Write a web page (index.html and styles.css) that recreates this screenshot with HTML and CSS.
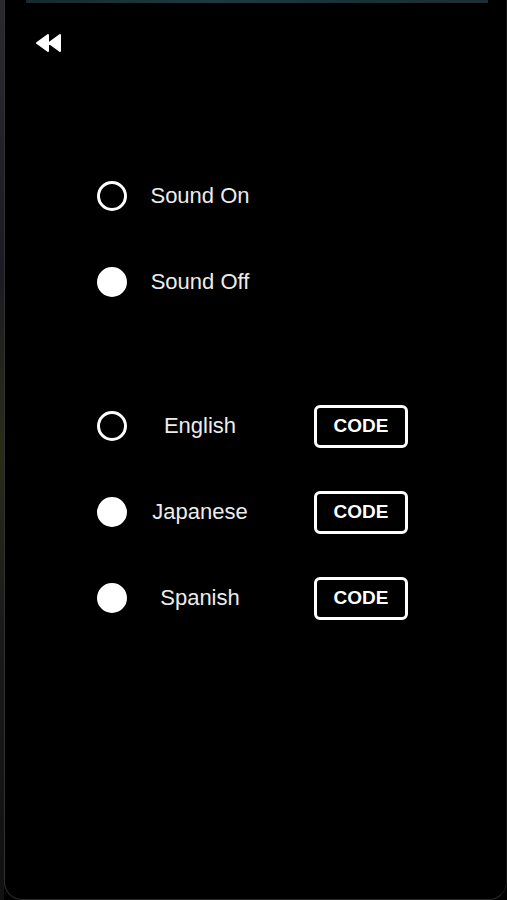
FILE: index.html
```html
<!DOCTYPE html>
<html lang="en">
<head>
<meta charset="utf-8">
<title>Settings</title>
<link rel="stylesheet" href="styles.css">
</head>
<body>
<div class="device">
  <div class="edge"></div>
  <div class="screen">
    <div class="topbar"></div>
    <header class="header">
      <button class="back" aria-label="Back">
        <svg width="27" height="20" viewBox="0 0 27 20">
          <path d="M2 10 L13 2 L13 18 Z M14 10 L25 2 L25 18 Z" fill="#fff" stroke="#fff" stroke-width="2" stroke-linejoin="round"/>
        </svg>
      </button>
    </header>
    <main class="options">
      <section class="group">
        <div class="row"><span class="radio"></span><span class="label">Sound On</span></div>
        <div class="row"><span class="radio filled"></span><span class="label">Sound Off</span></div>
      </section>
      <section class="group lang">
        <div class="row"><span class="radio"></span><span class="label">English</span><button class="code">CODE</button></div>
        <div class="row"><span class="radio filled"></span><span class="label">Japanese</span><button class="code">CODE</button></div>
        <div class="row"><span class="radio filled"></span><span class="label">Spanish</span><button class="code">CODE</button></div>
      </section>
    </main>
  </div>
</div>
</body>
</html>
```
FILE: styles.css
```css
html, body {
  margin: 0;
  padding: 0;
  background: #000;
  height: 100%;
}
body {
  font-family: "Liberation Sans", Arial, sans-serif;
  color: #ececec;
  overflow: hidden;
}
.device {
  display: flex;
  height: 900px;
}
.edge {
  width: 4px;
  flex: none;
  background: linear-gradient(180deg, #2a2a2e 0%, #1c1a22 30%, #2a2c18 50%, #1a1a1c 70%, #111 100%);
}
.screen {
  flex: 1;
  background: #000;
  border-left: 1px solid #2f2f2f;
  border-bottom: 1px solid #2a2a2a;
  border-right: 1px solid #141414;
  border-bottom-left-radius: 18px;
  border-bottom-right-radius: 18px;
  box-sizing: border-box;
  display: flex;
  flex-direction: column;
}
.topbar {
  height: 3px;
  margin: 0 18px 0 21px;
  background: linear-gradient(90deg, #18292c, #1f3a3f 40%, #1a3237 70%, #1c2e33);
}
.header {
  padding: 30px 0 0 30px;
  height: 20px;
}
.back {
  display: block;
  padding: 0;
  margin: 0;
  border: 0;
  background: none;
  width: 27px;
  height: 20px;
}
.back svg { display: block; }
.options {
  margin-top: 100px;
  padding-left: 92px;
  display: flex;
  flex-direction: column;
  gap: 58px;
}
.group {
  display: flex;
  flex-direction: column;
}
.row {
  height: 86px;
  display: flex;
  align-items: center;
}
.radio {
  width: 30px;
  height: 30px;
  box-sizing: border-box;
  border: 3px solid #fff;
  border-radius: 50%;
  flex: none;
}
.radio.filled {
  background: #fff;
}
.label {
  width: 120px;
  margin-left: 13px;
  text-align: center;
  font-size: 22px;
  line-height: 24px;
}
.code {
  margin-left: 54px;
  width: 94px;
  height: 43px;
  box-sizing: border-box;
  border: 3px solid #fff;
  border-radius: 6px;
  background: #000;
  color: #fff;
  font-family: "Liberation Sans", Arial, sans-serif;
  font-weight: bold;
  font-size: 19px;
  padding: 0;
  cursor: pointer;
}
```
